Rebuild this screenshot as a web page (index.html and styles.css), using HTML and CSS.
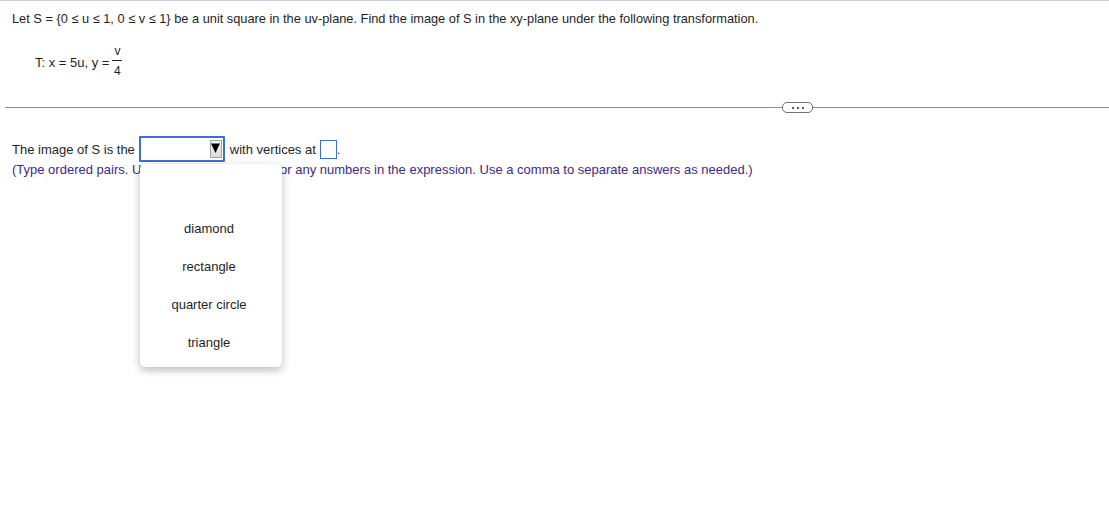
FILE: index.html
```html
<!DOCTYPE html>
<html>
<head>
<meta charset="utf-8">
<link rel="stylesheet" href="styles.css">
</head>
<body>
<div class="page">
  <p class="stem">Let S = {0 ≤ u ≤ 1, 0 ≤ v ≤ 1} be a unit square in the uv-plane. Find the image of S in the xy-plane under the following transformation.</p>
  <div class="formula">
    <span>T: x = 5u, y =</span>
    <span class="frac"><span class="num">v</span><span class="den">4</span></span>
  </div>
  <div class="divider">
    <span class="rule rule-left"></span>
    <span class="pill"><i></i><i></i><i></i></span>
    <span class="rule rule-right"></span>
  </div>
  <div class="answer">
    <div class="answer-line">
      <span>The image of S is the</span>
      <span class="select"><span class="arrow"><svg width="9" height="10" viewBox="0 0 9 10"><path d="M0 0.5 H9 L4.5 10 Z" fill="#000"/></svg></span></span>
      <span>with vertices at</span>
      <span class="box"></span><span>.</span>
    </div>
    <p class="hint">(Type ordered pairs. Use integers or fractions for any numbers in the expression. Use a comma to separate answers as needed.)</p>
    <ul class="menu">
      <li>diamond</li>
      <li>rectangle</li>
      <li>quarter circle</li>
      <li>triangle</li>
    </ul>
  </div>
</div>
</body>
</html>
```

FILE: styles.css
```css
html, body {
  margin: 0;
  padding: 0;
  background: #ffffff;
}
body {
  font-family: "Liberation Sans", Arial, sans-serif;
  font-size: 13px;
  color: #1f1f1f;
  border-top: 1px solid #c9cdda;
}
.page {
  position: relative;
  height: 504px;
}
.stem {
  margin: 0;
  padding: 10px 0 0 12px;
  line-height: 16px;
  font-size: 12.8px;
}
.formula {
  display: flex;
  align-items: center;
  padding-left: 35px;
  margin-top: 18px;
  height: 34px;
}
.frac {
  display: inline-flex;
  flex-direction: column;
  align-items: center;
  margin-left: 3px;
  margin-bottom: 2px;
  font-size: 12px;
}
.num {
  padding: 0 2px 2px;
  border-bottom: 1px solid #1f1f1f;
  line-height: 13px;
}
.den {
  line-height: 14px;
  padding-top: 3px;
}
.divider {
  display: flex;
  align-items: center;
  margin: 23px 0 0 5px;
  height: 11px;
}
.rule {
  height: 1px;
  background: #8a8f9b;
}
.rule-left {
  width: 777px;
}
.rule-right {
  flex: 1;
}
.pill {
  width: 29px;
  height: 9px;
  border: 1px solid #6d7280;
  border-radius: 5px;
  display: flex;
  justify-content: center;
  align-items: center;
  gap: 3px;
  background: #fff;
}
.pill i {
  width: 2px;
  height: 2px;
  background: #555b66;
  display: block;
}
.answer {
  position: relative;
  padding: 23px 0 0 12px;
}
.answer-line {
  display: flex;
  align-items: center;
  height: 26px;
}
.select {
  width: 82px;
  height: 22px;
  border: 2px solid #3d6ed6;
  margin: 0 5px 0 4px;
  border-radius: 1px;
  display: flex;
  justify-content: flex-end;
  align-items: center;
  box-sizing: content-box;
}
.arrow {
  width: 12px;
  height: 18px;
  margin-right: 1px;
  border: 1px solid #a3a3a3;
  background: linear-gradient(#f4f4f4, #dcdcdc);
  display: flex;
  justify-content: center;
  align-items: flex-start;
  padding-top: 2px;
  box-sizing: border-box;
}
.arrow svg {
  display: block;
}
.box {
  width: 15px;
  height: 17px;
  border: 1px solid #3d6ed6;
  margin-left: 4px;
}
.hint {
  margin: 0;
  line-height: 16px;
  color: #3f2a7e;
  padding-top: 0;
}
.menu {
  position: absolute;
  left: 140px;
  top: 51px;
  width: 142px;
  margin: 0;
  padding: 46px 4px 5px 0;
  box-sizing: border-box;
  list-style: none;
  background: #fff;
  border-radius: 5px;
  box-shadow: 0 3px 8px rgba(0, 0, 0, 0.28);
  color: #1f1f1f;
}
.menu li {
  height: 38px;
  line-height: 38px;
  text-align: center;
}
```
